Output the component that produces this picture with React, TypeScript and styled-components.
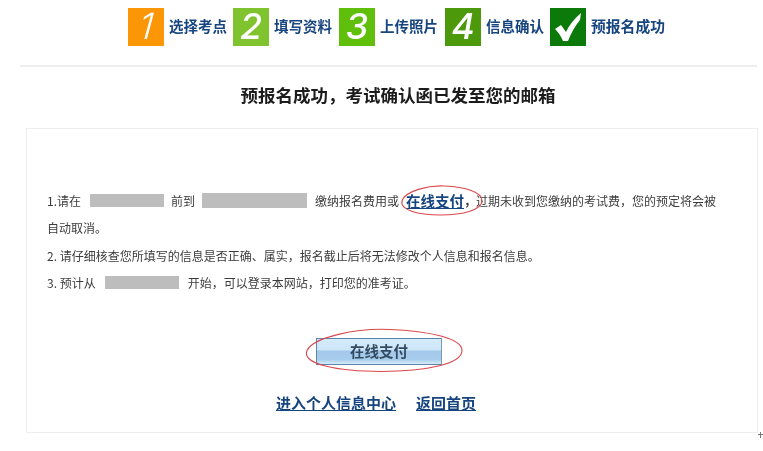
import React from "react";
import styled, { createGlobalStyle } from "styled-components";

const Global = createGlobalStyle`
  html, body { margin: 0; padding: 0; background: #fff; }
  body { font-family: "Liberation Sans", "Noto Sans CJK SC", sans-serif; }
`;
const Page = styled.div`
  position: relative;
  width: 763px;
  height: 451px;
  overflow: hidden;
  box-sizing: border-box;
  padding-top: 8px;
  background: #fff;
`;
const Steps = styled.div`
  display: flex;
  align-items: center;
  margin-left: 128px;
  height: 38px;
`;
const Step = styled.div<{ $gap: number }>`
  display: flex;
  align-items: center;
  margin-right: ${(p) => p.$gap}px;
`;
const StepIcon = styled.div<{ $bg: string }>`
  width: 36px;
  height: 38px;
  background: ${(p) => p.$bg};
  display: flex;
  align-items: center;
  justify-content: center;
  filter: blur(0.4px);
`;
const Digit = styled.span<{ $thin: boolean }>`
  display: block;
  color: #fff;
  font-family: "Inter", "Liberation Sans", sans-serif;
  font-size: 36px;
  font-weight: ${(p) => (p.$thin ? 300 : 500)};
  font-style: italic;
  transform: skewX(${(p) => (p.$thin ? -6 : 0)}deg) translateY(-1px);
`;
const StepLabel = styled.span<{ $size: number }>`
  margin-left: 5px;
  font: bold ${(p) => p.$size}px "Noto Sans CJK SC", sans-serif;
  color: #17457f;
  filter: blur(0.4px);
  white-space: nowrap;
  transform: translateY(-2px);
`;
const Divider = styled.div`
  height: 2px;
  margin: 19px 6px 0 20px;
  background: #eeeeee;
`;
const Title = styled.h1`
  margin: 16px 0 0 33px;
  height: 24px;
  text-align: center;
  font: bold 17.5px/24px "Noto Sans CJK SC", sans-serif;
  color: #1c1c1c;
  filter: blur(0.3px);
`;
const Card = styled.div`
  box-sizing: border-box;
  width: 732px;
  height: 305px;
  margin: 21px 0 0 26px;
  border: 1px solid #eeeeee;
  padding-top: 58px;
  position: relative;
`;
const Notes = styled.div`
  margin-left: 20px;
  width: 690px;
  font: 12px/27.3px "Noto Sans CJK SC", sans-serif;
  color: #3c3c3c;
  filter: blur(0.35px);
`;
const Line = styled.div`
  height: 27.3px;
  white-space: nowrap;
  display: flex;
  align-items: center;
`;
const Mask = styled.span<{ $w: number; $h: number; $l: number; $r: number }>`
  display: inline-block;
  width: ${(p) => p.$w}px;
  height: ${(p) => p.$h}px;
  margin: 0 ${(p) => p.$r}px 0 ${(p) => p.$l}px;
  background: #bdbdbd;
`;
const PayLink = styled.a`
  margin: 0 0 0 7px;
  font: bold 14.5px "Noto Sans CJK SC", sans-serif;
  color: #17457f;
  text-decoration: underline;
`;
const Comma = styled.span`
  font-weight: bold;
`;
const Ring = styled.svg`
  position: absolute;
  overflow: visible;
  fill: none;
  stroke: #d9484c;
  stroke-width: 1.1;
`;
const LinkRing = styled(Ring)`
  left: 370px;
  top: 56px;
  width: 85px;
  height: 31px;
`;
const ButtonRow = styled.div`
  display: flex;
  justify-content: flex-start;
  padding-left: 289px;
  margin: 42px 0 0 0;
  position: relative;
`;
const PayButton = styled.button`
  width: 126px;
  height: 27px;
  padding: 0 0 2px;
  border: 1px solid #5f86a8;
  border-right-color: #7c99b2;
  background: linear-gradient(#d3ebfb 0%, #cde6f8 44%, #a3c8ea 48%, #a7cdec 82%, #d6ebf9 100%);
  font: bold 14.5px "Noto Sans CJK SC", sans-serif;
  color: #344c62;
  filter: blur(0.35px);
`;
const ButtonRing = styled(Ring)`
  left: 270px;
  top: -10px;
  width: 165px;
  height: 45px;
`;
const Links = styled.div`
  display: flex;
  justify-content: flex-start;
  gap: 20px;
  padding-left: 249px;
  margin-top: 28px;
  filter: blur(0.35px);
`;
const BottomLink = styled.a`
  font: bold 15px/20px "Noto Sans CJK SC", sans-serif;
  color: #17457f;
  text-decoration: underline;
`;
const Cursor = styled.svg`
  position: absolute;
  left: 758px;
  top: 432px;
  width: 5px;
  height: 6px;
  fill: #777;
`;

const steps = [
  { n: "1", bg: "#fb9606", label: "选择考点", gap: 6, thin: true },
  { n: "2", bg: "#7fc42e", label: "填写资料", gap: 7, thin: false },
  { n: "3", bg: "#5fbf0a", label: "上传照片", gap: 7, thin: false },
  { n: "4", bg: "#4c9a0b", label: "信息确认", gap: 6, thin: false },
];

const ringPath = "M5 15C8 6 30 0 46 1c20 1 36 6 36 14 0 9-18 14-40 14C20 29 2 24 5 15Z";

export default function App() {
  return (
    <Page>
      <Global />
      <Steps>
        {steps.map((s) => (
          <Step key={s.n} $gap={s.gap}>
            <StepIcon $bg={s.bg}>
              <Digit $thin={s.thin}>{s.n}</Digit>
            </StepIcon>
            <StepLabel $size={14.5}>{s.label}</StepLabel>
          </Step>
        ))}
        <Step $gap={0}>
          <StepIcon $bg="#0b7a0b">
            <svg width="30" height="30" viewBox="0 0 30 30" aria-hidden="true">
              <path d="M2 17l6-4 5 7C16 13 21 7 28 1l-1 7c-5 6-9 13-12 21H10C8 24 5 20 2 17Z" fill="#fff" />
            </svg>
          </StepIcon>
          <StepLabel $size={14.8}>预报名成功</StepLabel>
        </Step>
      </Steps>
      <Divider />
      <Title>预报名成功，考试确认函已发至您的邮箱</Title>
      <Card>
        <Notes>
          <Line>
            1.请在
            <Mask $w={74} $h={13} $l={9} $r={7} />
            前到
            <Mask $w={105} $h={15} $l={7} $r={8} />
            缴纳报名费用或
            <PayLink>在线支付</PayLink>
            <Comma>，</Comma>
            过期未收到您缴纳的考试费，您的预定将会被
          </Line>
          <Line>自动取消。</Line>
          <Line>2. 请仔细核查您所填写的信息是否正确、属实，报名截止后将无法修改个人信息和报名信息。</Line>
          <Line>
            3. 预计从
            <Mask $w={74} $h={13} $l={9} $r={9} />
            开始，可以登录本网站，打印您的准考证。
          </Line>
        </Notes>
        <LinkRing viewBox="0 0 82 30" preserveAspectRatio="none" aria-hidden="true">
          <path d={ringPath} vectorEffect="non-scaling-stroke" />
        </LinkRing>
        <ButtonRow>
          <PayButton>在线支付</PayButton>
          <ButtonRing viewBox="0 0 82 30" preserveAspectRatio="none" aria-hidden="true">
            <path d={ringPath} vectorEffect="non-scaling-stroke" />
          </ButtonRing>
        </ButtonRow>
        <Links>
          <BottomLink>进入个人信息中心</BottomLink>
          <BottomLink>返回首页</BottomLink>
        </Links>
      </Card>
      <Cursor viewBox="0 0 5 6" aria-hidden="true">
        <path d="M2 0h1v2h2v1H3v3H2V3H0V2h2Z" />
      </Cursor>
    </Page>
  );
}
